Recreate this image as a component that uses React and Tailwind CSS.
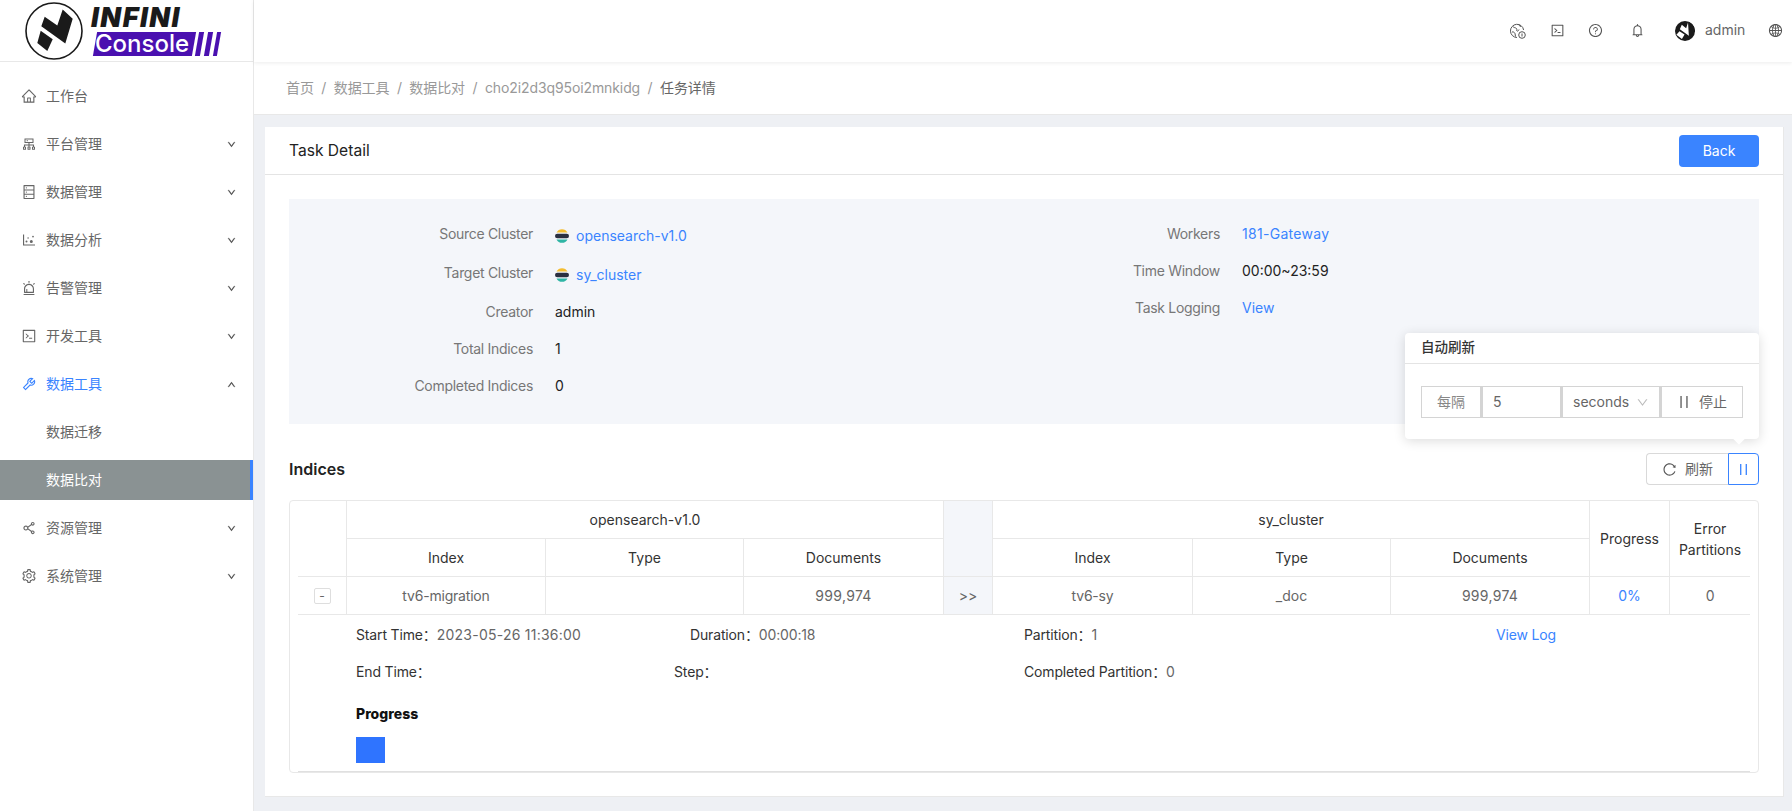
import React from 'react';
import {
  AiOutlineHome,
  AiOutlineCluster,
  AiOutlineDatabase,
  AiOutlineDotChart,
  AiOutlineAlert,
  AiOutlineCode,
  AiOutlineTool,
  AiOutlineShareAlt,
  AiOutlineSetting,
  AiOutlineDown,
  AiOutlineUp,
  AiOutlineQuestionCircle,
  AiOutlineBell,
  AiOutlineGlobal,
  AiOutlineReload,
  AiOutlinePause,
} from 'react-icons/ai';

const menu = [
  { label: '工作台', icon: AiOutlineHome },
  { label: '平台管理', icon: AiOutlineCluster, arrow: true },
  { label: '数据管理', icon: AiOutlineDatabase, arrow: true },
  { label: '数据分析', icon: AiOutlineDotChart, arrow: true },
  { label: '告警管理', icon: AiOutlineAlert, arrow: true },
  { label: '开发工具', icon: AiOutlineCode, arrow: true },
];

const Mark = ({ className }) => (
  <svg viewBox="0 0 58 58" className={className}>
    <circle cx="29" cy="29" r="28" fill="none" stroke="#1a1a1a" strokeWidth="1.6" />
    <path d="M37.7 7.5 47.7 16.8 40.3 41.5 16.3 24.2 19.700 14.800 32.300 23.500Z" fill="#1a1a1a" />
    <path d="M15.700 28.700 27.700 37.300 22.300 49 12.300 41Z" fill="#1a1a1a" />
  </svg>
);

const Logo = () => (
  <div className="h-[62px] flex items-center pl-[25px] border-b border-[#e8e8e8]">
    <Mark className="w-[58px] h-[58px] shrink-0" />
    <div className="ml-[8px] flex flex-col">
      <span className="text-[27px] leading-[26px] font-black italic text-[#1a1a1a] tracking-[1.5px]">INFINI</span>
      <div className="flex items-center mt-[1px] ml-[4px]">
        <div className="w-[99px] h-[24px] bg-[#4a10b0] -skew-x-[10deg] flex items-center">
          <span className="skew-x-[10deg] text-[24px] leading-[24px] font-medium text-white">Console</span>
        </div>
        <div className="ml-[3px] w-[5px] h-[24px] bg-[#4a10b0] -skew-x-[10deg]"></div>
        <div className="ml-[4px] w-[5px] h-[24px] bg-[#4a10b0] -skew-x-[10deg]"></div>
        <div className="ml-[4px] w-[4px] h-[24px] bg-[#4a10b0] -skew-x-[10deg]"></div>
      </div>
    </div>
  </div>
);

const MenuItem = ({ label, icon: Icon, arrow }) => (
  <div className="h-10 flex items-center pl-[21px] pr-[17px] text-[#666]">
    <Icon size={16} className="mr-[9px] shrink-0" />
    <span>{label}</span>
    {arrow && <AiOutlineDown size={9} className="ml-auto text-[#444] stroke-[#444] stroke-[50]" />}
  </div>
);

const Sidebar = () => (
  <aside className="w-[254px] shrink-0 bg-white border-r border-[#e8e8e8] flex flex-col">
    <Logo />
    <nav className="flex flex-col gap-2 pt-[14px] text-sm">
      {menu.map((m) => (
        <MenuItem key={m.label} {...m} />
      ))}
      <div className="h-10 flex items-center pl-[21px] pr-[17px] text-[#3a84ff]">
        <AiOutlineTool size={16} className="mr-[9px] shrink-0" />
        <span>数据工具</span>
        <AiOutlineUp size={9} className="ml-auto text-[#444] stroke-[#444] stroke-[50]" />
      </div>
      <div className="h-10 flex items-center pl-[46px] text-[#666]">数据迁移</div>
      <div className="h-10 flex items-center pl-[46px] text-white bg-[#8a9293] border-r-[3px] border-[#3a84ff]">数据比对</div>
      <MenuItem label="资源管理" icon={AiOutlineShareAlt} arrow />
      <MenuItem label="系统管理" icon={AiOutlineSetting} arrow />
    </nav>
  </aside>
);

const Header = () => (
  <header className="h-[62px] shrink-0 bg-white shadow-[0_1px_4px_rgba(0,0,0,0.08)] relative flex items-center justify-end text-[#555]">
    <svg viewBox="0 0 16 16" className="w-[16px] h-[16px] absolute left-[1256px] top-[23px]" fill="none" stroke="#555" strokeWidth="1">
      <path d="M13.6 7A6.6 6.6 0 1 0 7 14.5" />
      <path d="M3 3.5c1 1.5 2.5 1 3.5 2s-.5 2 .5 2.500 1.500-.5 2-1.500M2 9c1.500-.5 2.500.5 3 1.500s0 2 .5 3M9.500 1.800C9 3 10 3.500 11 3.500" />
      <circle cx="12" cy="12" r="3.300" />
      <path d="M12 10.500v3" />
    </svg>
    <AiOutlineCode size={15} className="absolute left-[1296px] top-[23px]" />
    <AiOutlineQuestionCircle size={15} className="absolute left-[1334px] top-[23px]" />
    <AiOutlineBell size={15} className="absolute left-[1376px] top-[23px]" />
    <div className="absolute left-[1421px] top-[21px] w-[20px] h-[20px] rounded-full bg-[#1a1a1a] overflow-hidden">
      <svg viewBox="0 0 58 58" className="w-full h-full">
        <path d="M37.700 4 50 16.800 40.300 43 14 24 19.700 11 32.300 21Z" fill="#fff" />
        <path d="M37.700 4 58 0 58 30 40.300 43Z" fill="#1a1a1a" />
        <path d="M13 30 27.700 39 20 52 4 40Z" fill="#fff" />
      </svg>
    </div>
    <span className="absolute left-[1451px] top-[20px] text-sm text-[#666]">admin</span>
    <AiOutlineGlobal size={15} className="absolute left-[1514px] top-[23px]" />
  </header>
);

const crumbs = ['首页', '数据工具', '数据比对', 'cho2i2d3q95oi2mnkidg'];

const Breadcrumb = () => (
  <div className="h-[53px] shrink-0 bg-white border-b border-[#e8e8e8] flex items-center pl-[32px] text-sm text-[#999] tracking-[-0.1px]">
    {crumbs.map((c) => (
      <React.Fragment key={c}>
        <span>{c}</span>
        <span className="mx-[7.5px]">/</span>
      </React.Fragment>
    ))}
    <span className="text-[#666]">任务详情</span>
  </div>
);

const ClusterIcon = () => (
  <svg viewBox="0 0 14 16" className="w-[14px] h-[16px] mr-[7px] shrink-0">
    <path d="M1.500 4.500A6.200 6.200 0 0 1 12.500 4.500Z" fill="#f4bd2f" />
    <rect x="0" y="5.700" width="14" height="4.600" rx="2.300" fill="#2b3040" />
    <path d="M1.500 11.500A6.200 6.200 0 0 0 12.500 11.500Z" fill="#2fb5a5" />
  </svg>
);

const Info = ({ label, children, cluster }) => (
  <div className={`flex items-start ${cluster ? 'h-[39px]' : 'h-[37px]'}`}>
    <div className="h-[37px] w-[244px] flex items-center justify-end text-[#777] tracking-[-0.3px] shrink-0">{label}</div>
    <div className={`h-[37px] flex items-center text-[#222] ml-[22px] ${cluster ? 'mt-[2px]' : ''}`}>{children}</div>
  </div>
);

const Link = ({ children }) => <span className="text-[#3a84ff]">{children}</span>;

const Overview = () => (
  <div className="bg-[#f4f6fa] h-[225px] pt-4 flex text-sm">
    <div className="w-[687px]">
      <Info label="Source Cluster" cluster><ClusterIcon /><Link>opensearch-v1.0</Link></Info>
      <Info label="Target Cluster" cluster><ClusterIcon /><Link>sy_cluster</Link></Info>
      <Info label="Creator">admin</Info>
      <Info label="Total Indices">1</Info>
      <Info label="Completed Indices">0</Info>
    </div>
    <div>
      <Info label="Workers"><span className="tracking-[0.3px]"><Link>181-Gateway</Link></span></Info>
      <Info label="Time Window">00:00~23:59</Info>
      <Info label="Task Logging"><Link>View</Link></Info>
    </div>
  </div>
);

const RefreshPopover = () => (
  <div className="absolute right-0 bottom-[46px] w-[354px] h-[106px] bg-white rounded-[4px] shadow-[0_2px_12px_rgba(0,0,0,0.14)] z-10 text-sm">
    <div className="h-[31px] border-b border-[#e4e4e4] pl-[16px] flex items-center text-[13.5px] font-medium text-[#333]">自动刷新</div>
    <div className="pt-[22px] pl-[16px] flex text-[#666]">
      <div className="w-[60px] h-[32px] border border-[#d4d4d4] flex items-center justify-center text-[#888]">每隔</div>
      <div className="w-[80px] h-[32px] border border-[#d4d4d4] border-l-[2px] flex items-center pl-[10px]">5</div>
      <div className="w-[99px] h-[32px] border border-[#d4d4d4] border-l-[2px] flex items-center pl-[10px]">
        seconds
        <AiOutlineDown size={13} className="ml-auto mr-[10px] text-[#bbb]" />
      </div>
      <div className="w-[83px] h-[32px] border border-[#d4d4d4] border-l-[2px] flex items-center pl-[13px]">
        <AiOutlinePause size={18} className="mr-[6px]" />
        停止
      </div>
    </div>
    <div className="absolute right-[16px] -bottom-[4px] w-[8px] h-[8px] bg-white rotate-45"></div>
  </div>
);

const IndicesBar = () => (
  <div className="relative mt-[29px] mb-[15px] h-[32px] flex items-center justify-between">
    <h3 className="text-base font-semibold text-[#222] -mt-px">Indices</h3>
    <div className="flex text-sm text-[#666]">
      <div className="w-[82px] h-[32px] border border-[#d9d9d9] border-r-0 rounded-l-[4px] flex items-center pl-[15px]">
        <AiOutlineReload size={15} className="mr-[8px] text-[#555]" />
        刷新
      </div>
      <div className="w-[31px] h-[32px] border border-[#3a84ff] rounded-r-[4px] flex items-center justify-center text-[#3a84ff]">
        <AiOutlinePause size={17} />
      </div>
    </div>
    <RefreshPopover />
  </div>
);

const th = 'h-[38px] border-r border-b border-[#e8e8e8] font-normal text-[#333] text-center px-1';
const td = 'h-[38px] border-r border-b border-[#e8e8e8] text-center';

const Expanded = () => (
  <div className="h-[156px] pl-[58px] pt-[1px] text-left text-[#333] tracking-[-0.15px]">
    <div className="flex h-[37px] items-center">
      <div className="w-[334px]">Start Time：<span className="text-[#666] tracking-[0.24px]">2023-05-26 11:36:00</span></div>
      <div className="w-[334px]">Duration：<span className="text-[#666]">00:00:18</span></div>
      <div className="w-[472px]">Partition：<span className="text-[#666]">1</span></div>
      <Link>View Log</Link>
    </div>
    <div className="flex h-[37px] items-center">
      <div className="w-[318px]">End Time：</div>
      <div className="w-[350px]">Step：</div>
      <div>Completed Partition：<span className="text-[#666]">0</span></div>
    </div>
    <div className="mt-[13px] leading-[21px] font-extrabold text-[#111] tracking-normal">Progress</div>
    <div className="mt-[13px] w-[29px] h-[26px] bg-[#2f74ff]"></div>
  </div>
);

const IndicesTable = () => (
  <div className="border border-[#e8e8e8] rounded-[4px] px-[8px] text-sm">
    <table className="w-[1452px] table-fixed border-separate border-spacing-0">
      <colgroup>
        <col className="w-[49px]" />
        <col className="w-[199px]" />
        <col className="w-[198px]" />
        <col className="w-[200px]" />
        <col className="w-[49px]" />
        <col className="w-[200px]" />
        <col className="w-[198px]" />
        <col className="w-[199px]" />
        <col className="w-[80px]" />
        <col className="w-[80px]" />
      </colgroup>
      <thead>
        <tr>
          <th rowSpan={2} className={th}></th>
          <th colSpan={3} className={th}>opensearch-v1.0</th>
          <th rowSpan={2} className={`${th} bg-[#f4f6fa]`}></th>
          <th colSpan={3} className={th}>sy_cluster</th>
          <th rowSpan={2} className={th}>Progress</th>
          <th rowSpan={2} className="border-b border-[#e8e8e8] font-normal text-[#333] text-center px-1 leading-[21px]">Error Partitions</th>
        </tr>
        <tr>
          <th className={th}>Index</th>
          <th className={th}>Type</th>
          <th className={th}>Documents</th>
          <th className={th}>Index</th>
          <th className={th}>Type</th>
          <th className={th}>Documents</th>
        </tr>
      </thead>
      <tbody className="text-[#666]">
        <tr>
          <td className={td}>
            <div className="w-[17px] h-[16px] mx-auto border border-[#dedede] rounded-[2px] flex items-center justify-center text-xs leading-none">-</div>
          </td>
          <td className={`${td} tracking-[-0.2px]`}>tv6-migration</td>
          <td className={td}></td>
          <td className={`${td} tracking-[0.3px]`}>999,974</td>
          <td className={`${td} bg-[#f4f6fa]`}>&gt;&gt;</td>
          <td className={`${td} tracking-[-0.2px]`}>tv6-sy</td>
          <td className={td}>_doc</td>
          <td className={`${td} tracking-[0.3px]`}>999,974</td>
          <td className={`${td} text-[#3a84ff]`}>0%</td>
          <td className="border-b border-[#e8e8e8] text-center">0</td>
        </tr>
        <tr>
          <td colSpan={10} className="border-b border-[#e0e0e0]">
            <Expanded />
          </td>
        </tr>
      </tbody>
    </table>
  </div>
);

const App = () => {
  return (
    <div className="h-[811px] overflow-hidden flex bg-white font-['Inter','Noto_Sans_CJK_SC',sans-serif]">
      <Sidebar />
      <div className="flex-1 min-w-0 flex flex-col">
        <Header />
        <Breadcrumb />
        <main className="flex-1 bg-[#eef0f4] pt-[12px] pl-[11px] pr-[8px]">
          <div className="h-[670px] bg-white border border-[#e8e8e8] border-t-0 border-l-0">
            <div className="h-[48px] border-b border-[#e4e4e4] px-[24px] flex items-center justify-between">
              <h2 className="text-[15.6px] text-[#222]">Task Detail</h2>
              <button className="w-[80px] h-[32px] bg-[#3a84ff] text-white text-sm rounded-[4px]">Back</button>
            </div>
            <div className="px-[24px] pt-[24px]">
              <Overview />
              <IndicesBar />
              <IndicesTable />
            </div>
          </div>
        </main>
      </div>
    </div>
  );
};

export default App;
